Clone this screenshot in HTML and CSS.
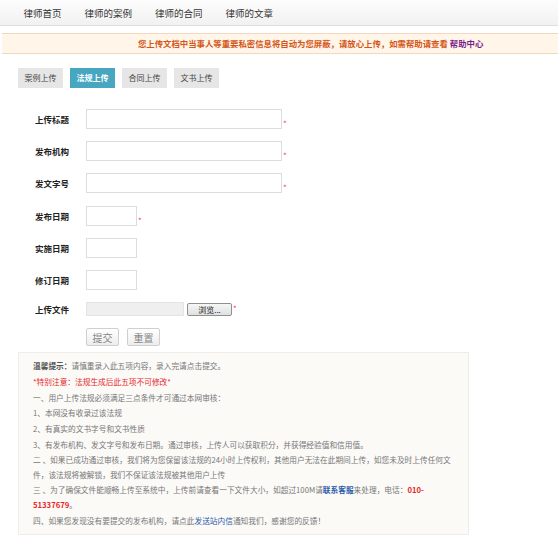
FILE: index.html
```html
<!DOCTYPE html>
<html>
<head>
  <meta charset="UTF-8">
  <title>法规上传</title>
  <link rel="stylesheet" href="styles.css">
</head>
<body>
  <div class="nav">
    <a href="#">律师首页</a>
    <a href="#">律师的案例</a>
    <a href="#">律师的合同</a>
    <a href="#">律师的文章</a>
  </div>

  <div class="notice">
    您上传文档中当事人等重要私密信息将自动为您屏蔽，请放心上传，如需帮助请查看 <a href="#">帮助中心</a>
  </div>

  <div class="tabs">
    <span class="tab">案例上传</span>
    <span class="tab active">法规上传</span>
    <span class="tab">合同上传</span>
    <span class="tab">文书上传</span>
  </div>

  <form class="upload">
    <div class="row">
      <label>上传标题</label>
      <input type="text" class="long">
      <span class="req">*</span>
    </div>
    <div class="row">
      <label>发布机构</label>
      <input type="text" class="long">
      <span class="req">*</span>
    </div>
    <div class="row">
      <label>发文字号</label>
      <input type="text" class="long">
      <span class="req">*</span>
    </div>
    <div class="row">
      <label>发布日期</label>
      <input type="text" class="short">
      <span class="req">*</span>
    </div>
    <div class="row">
      <label>实施日期</label>
      <input type="text" class="short">
    </div>
    <div class="row">
      <label>修订日期</label>
      <input type="text" class="short">
    </div>
    <div class="row file-row">
      <label>上传文件</label>
      <span class="file-box"></span>
      <button type="button" class="browse">浏览...</button>
      <span class="req">*</span>
    </div>
    <div class="row actions">
      <button type="button" class="btn">提交</button>
      <button type="reset" class="btn">重置</button>
    </div>
  </form>

  <div class="tips">
    <p><strong>温馨提示：</strong>请慎重录入此五项内容，录入完请点击提交。</p>
    <p class="warn">*特别注意：法规生成后此五项不可修改*</p>
    <p>一、用户上传法规必须满足三点条件才可通过本网审核：</p>
    <p>1、本网没有收录过该法规</p>
    <p>2、有真实的文书字号和文书性质</p>
    <p>3、有发布机构、发文字号和发布日期。通过审核，上传人可以获取积分，并获得经验值和信用值。</p>
    <p>二 、如果已成功通过审核，我们将为您保留该法规的24小时上传权利，其他用户无法在此期间上传，如您未及时上传任何文<br>件，该法规将被解锁，我们不保证该法规被其他用户上传</p>
    <p>三 、为了确保文件能顺畅上传至系统中，上传前请查看一下文件大小，如超过100M请<a href="#" class="strong-link">联系客服</a>来处理，电话：<span class="tel">010-<br>51337679</span>。</p>
    <p>四、如果您发现没有要提交的发布机构，请点此<a href="#">发送站内信</a>通知我们，感谢您的反馈！</p>
  </div>
</body>
</html>
```

FILE: styles.css
```css
body {
  margin: 0;
  font-family: "Noto Sans CJK SC", "Liberation Sans", sans-serif;
  color: #333;
  background: #fff;
}
a {
  text-decoration: none;
}

.nav {
  height: 26px;
  padding-left: 12px;
  display: flex;
  align-items: center;
  background: linear-gradient(#fdfdfd, #f1f1f1);
  border-bottom: 1px solid #dedede;
  box-sizing: border-box;
}
.nav a {
  padding: 0 11.5px;
  font-size: 9.5px;
  color: #333;
}

.notice {
  margin-top: 7px;
  margin-left: 2px;
  height: 21px;
  line-height: 19px;
  padding-left: 136px;
  box-sizing: border-box;
  background: #fff6e9;
  border-top: 1px solid #f3d8bf;
  border-bottom: 1px solid #f3d8bf;
  font-size: 8.4px;
  font-weight: bold;
  color: #d4561a;
}
.notice a {
  color: #7a1f8c;
}

.tabs {
  display: flex;
  gap: 7px;
  margin: 14px 0 0 18px;
}
.tab {
  width: 45px;
  height: 20px;
  line-height: 20px;
  text-align: center;
  font-size: 8px;
  color: #444;
  background: #e6e6e6;
}
.tab.active {
  background: #47a7c1;
  color: #fff;
  font-weight: bold;
}

.upload {
  margin: 21px 0 0 35px;
}
.row {
  display: flex;
  align-items: center;
  height: 20px;
  margin-bottom: 12.2px;
}
.row label {
  width: 51px;
  font-size: 8.5px;
  font-weight: bold;
  color: #222;
}
.row input {
  height: 20px;
  box-sizing: border-box;
  border: 1px solid #dcdcdc;
  margin: 0;
  padding: 0 3px;
  background: #fff;
}
.row input.long {
  width: 196px;
}
.row input.short {
  width: 51px;
}
.req {
  align-self: flex-end;
  margin-left: 1px;
  font-size: 8px;
  line-height: 10px;
  color: #ff3b3b;
}

.file-row {
  height: 14px;
  margin-bottom: 12px;
}
.file-row .req {
  align-self: center;
  line-height: 8px;
}
.file-box {
  width: 98px;
  height: 14px;
  background: #efefef;
  border: 1px solid #e4e4e4;
  box-sizing: border-box;
}
.browse {
  margin: 0 0 0 3px;
  width: 45px;
  height: 13px;
  padding: 0;
  font-family: inherit;
  font-size: 8px;
  line-height: 11px;
  color: #222;
  background: linear-gradient(#f6f6f6, #e0e0e0);
  border: 1px solid #8f8f8f;
  border-radius: 2px;
}

.actions {
  height: 18px;
  margin: 0 0 0 51px;
  gap: 8px;
}
.btn {
  width: 33px;
  height: 18px;
  padding: 0;
  font-family: inherit;
  font-size: 10px;
  color: #888;
  background: linear-gradient(#ffffff, #ededed);
  border: 1px solid #cfcfcf;
  border-radius: 2px;
}

.tips {
  width: 451px;
  box-sizing: border-box;
  margin: 6px 0 0 18px;
  padding: 6px 14px 5px;
  background: #fbfaf7;
  border: 1px solid #efedea;
  font-size: 7.7px;
  line-height: 14.5px;
  color: #777;
}
.tips p {
  margin: 0 0 1.2px;
}
.tips strong {
  color: #555;
}
.tips .warn {
  color: #e8262a;
}
.tips a {
  color: #2b5aa8;
}
.tips .strong-link {
  font-weight: bold;
}
.tips .tel {
  color: #e8262a;
  font-weight: bold;
}
```
